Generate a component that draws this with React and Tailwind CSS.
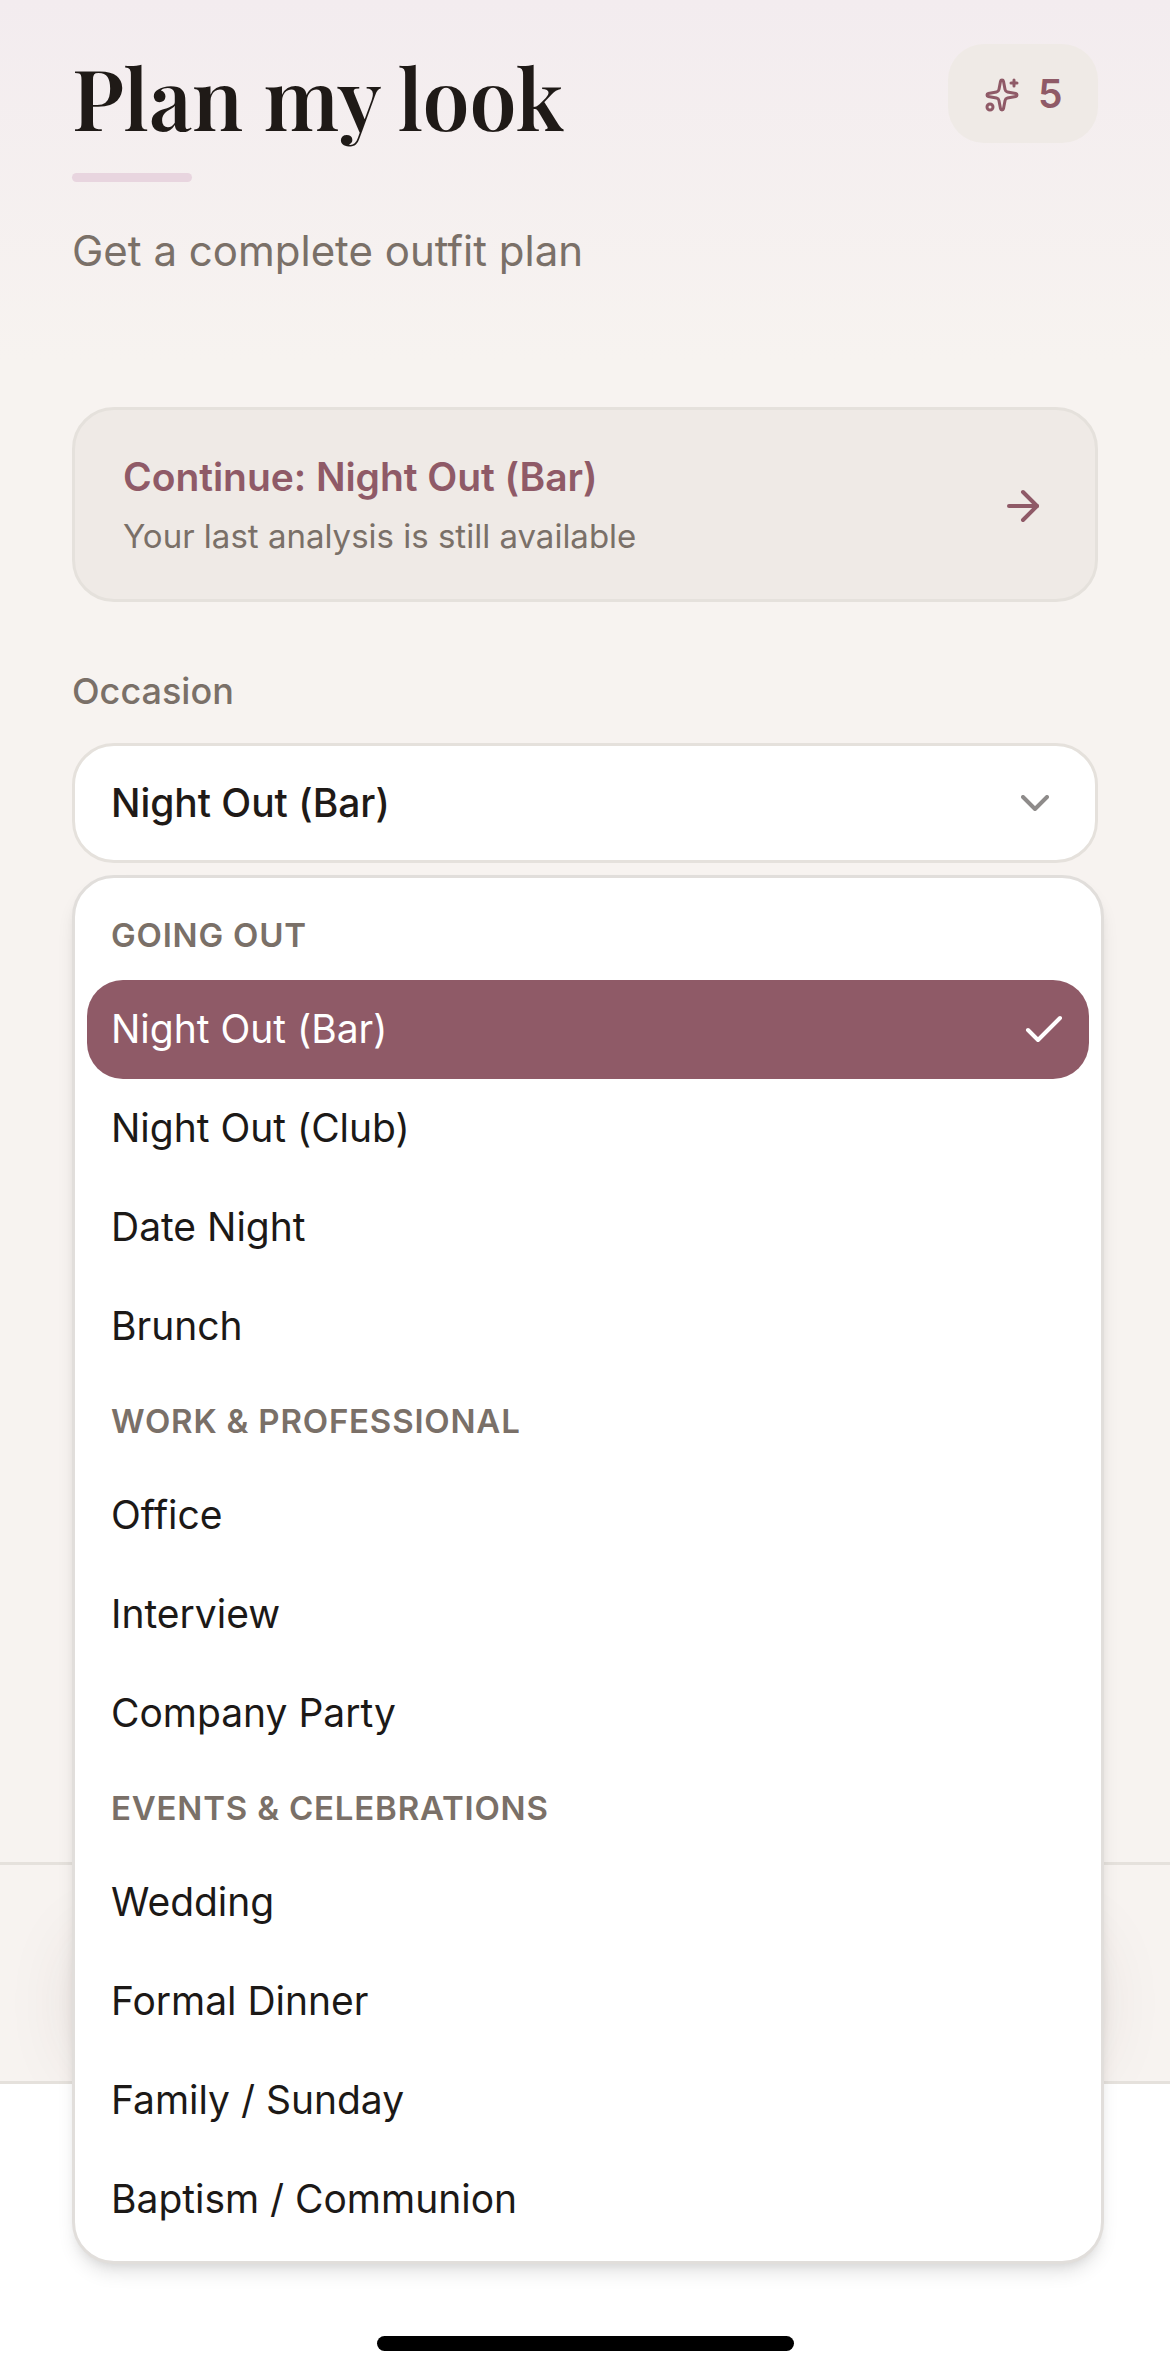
import { ArrowRight, Check, ChevronDown, Sparkles } from "lucide-react";

const groups = [
  { label: "GOING OUT", items: ["Night Out (Bar)", "Night Out (Club)", "Date Night", "Brunch"] },
  { label: "WORK & PROFESSIONAL", items: ["Office", "Interview", "Company Party"] },
  { label: "EVENTS & CELEBRATIONS", items: ["Wedding", "Formal Dinner", "Family / Sunday", "Baptism / Communion"] },
];

const selected = "Night Out (Bar)";

function Header() {
  return (
    <header className="flex items-start justify-between pt-11">
      <div>
        <h1 className="h-[129px] whitespace-nowrap font-['Playfair_Display','Liberation_Serif',serif] text-[84px] font-semibold leading-[105px] tracking-[0.1px] text-[#1f1a17]">
          Plan my look
        </h1>
        <div className="h-[9px] w-[120px] rounded-full bg-[#e8d5df]" />
        <p className="mt-9 text-[42px] leading-[66px] text-[#7a7068]">Get a complete outfit plan</p>
      </div>
      <div className="flex h-[99px] w-[150px] items-center gap-[18px] rounded-[36px] bg-[#efeae6] pl-9 text-[#8f5a67]">
        <Sparkles size={36} className="mt-[3px] shrink-0" />
        <span className="-mt-px text-[39px] font-semibold leading-none">5</span>
      </div>
    </header>
  );
}

function ContinueCard() {
  return (
    <button className="mt-[123px] flex h-[195px] w-full items-center justify-between rounded-[42px] border-3 border-[#e5e1dc] bg-[#efeae6] px-12 text-left">
      <span className="flex flex-col pt-[3px]">
        <span className="text-[39px] font-semibold leading-[60px] tracking-[-0.05px] text-[#8f5a67]">Continue: Night Out (Bar)</span>
        <span className="text-[33px] leading-[58px] text-[#7a7068]">Your last analysis is still available</span>
      </span>
      <ArrowRight size={48} className="mt-[3px] text-[#8f5a67]" />
    </button>
  );
}

function Option({ label }) {
  const active = label === selected;
  return (
    <li
      className={
        active
          ? "flex h-[99px] items-center justify-between rounded-[36px] bg-[#8f5a67] pl-6 pr-[21px] text-white"
          : "flex h-[99px] items-center pl-6 text-[#1c1917]"
      }
    >
      <span className="pb-[3px] text-[39px] leading-none tracking-[-0.02px]">{label}</span>
      {active && <Check size={48} className="mt-px" />}
    </li>
  );
}

function Menu() {
  return (
    <div className="absolute left-0 top-[132px] z-10 h-[1389px] w-[1032px] rounded-[42px] border-3 border-[#e1dedb] bg-white p-3 shadow-[0_12px_18px_-3px_rgba(0,0,0,0.1),0_6px_12px_-6px_rgba(0,0,0,0.1)]">
      {groups.map((g) => (
        <div key={g.label}>
          <div className="flex h-[90px] items-center pl-6 text-[33px] font-semibold leading-none tracking-[0.8px] text-[#7a7068]">
            {g.label}
          </div>
          <ul>
            {g.items.map((item) => (
              <Option key={item} label={item} />
            ))}
          </ul>
        </div>
      ))}
    </div>
  );
}

function OccasionField() {
  return (
    <section className="mt-[60px]">
      <label className="block h-[81px] text-[36px] font-medium leading-[58px] text-[#7a7068]">Occasion</label>
      <div className="relative">
        <button className="flex h-[120px] w-full items-center justify-between rounded-[42px] border-3 border-[#e5e1dc] bg-white px-9">
          <span className="pb-[1px] text-[39px] font-medium leading-none tracking-[-0.05px] text-[#1f1a17]">{selected}</span>
          <ChevronDown size={48} className="text-[#1f1a17] opacity-50" />
        </button>
        <Menu />
      </div>
    </section>
  );
}

export default function App() {
  return (
    <div className="flex h-[2375px] w-[1170px] flex-col overflow-hidden bg-white font-['Inter',sans-serif]">
      <main className="h-[1862px] shrink-0 bg-[#f7f3f0] bg-[linear-gradient(to_bottom,#f3ecef_0px,#f7f3f0_360px)] px-[72px]">
        <Header />
        <ContinueCard />
        <OccasionField />
      </main>
      <footer className="h-[222px] shrink-0 overflow-hidden border-y-3 border-[#e5e1dc] bg-[#f7f3f0] px-[72px] pt-9">
        <div className="h-[144px] rounded-[42px] bg-[#efeae6] shadow-[0_30px_75px_-9px_rgba(80,50,50,0.13)]" />
      </footer>
      <div className="flex flex-1 items-end justify-center pb-6">
        <div className="h-[15px] w-[417px] rounded-full bg-black" />
      </div>
    </div>
  );
}
